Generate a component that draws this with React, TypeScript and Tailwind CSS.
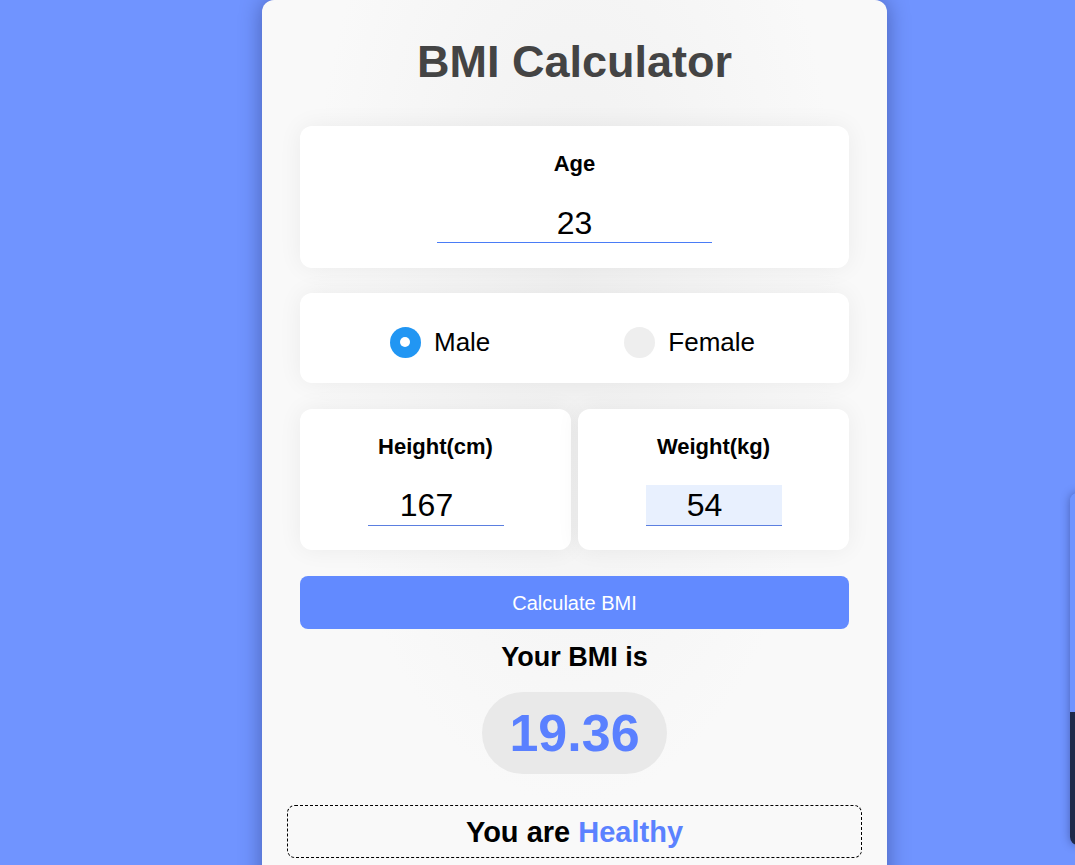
import React from "react";

const font = { fontFamily: '"Liberation Sans", Arial, sans-serif' };

export default function App() {
  return (
    <div
      className="relative min-h-screen w-full overflow-hidden bg-[#7094ff] flex justify-start pl-[262px]"
      style={font}
    >
      <div className="w-[625px] h-[900px] shrink-0 rounded-t-xl bg-[#f9f9f9] bg-[radial-gradient(ellipse_at_50%_30%,#f0f0f0_0%,#f9f9f9_60%)] shadow-[0_0_22px_rgba(0,0,40,0.35)] px-[38px] flex flex-col">
        <h1 className="mt-[34px] text-center text-[45px] leading-[56px] font-bold text-[#444444]">
          BMI Calculator
        </h1>

        {/* Age */}
        <div className="mt-[36px] h-[142px] rounded-xl bg-white shadow-[0_0_25px_rgba(0,0,0,0.06)] flex flex-col items-center pt-[25px]">
          <div className="text-[22px] leading-[25px] font-bold text-black">Age</div>
          <input
            defaultValue="23"
            className="mt-[27px] w-[275px] h-[40px] bg-transparent border-0 border-b border-[#4a7cf6] text-center text-[32px] text-black outline-none"
            style={font}
          />
        </div>

        {/* Gender */}
        <div className="mt-[25px] h-[90px] rounded-xl bg-white shadow-[0_0_25px_rgba(0,0,0,0.06)] flex items-center justify-center gap-[134px] pt-[8px] pr-[4px]">
          <label className="flex items-center gap-[13px]">
            <span className="w-[31px] h-[31px] rounded-full bg-[#2196f3] flex items-center justify-center">
              <span className="w-[10px] h-[10px] rounded-full bg-white" />
            </span>
            <span className="text-[26px] leading-[30px] text-black">Male</span>
          </label>
          <label className="flex items-center gap-[13px]">
            <span className="w-[31px] h-[31px] rounded-full bg-[#eeeeee]" />
            <span className="text-[26px] leading-[30px] text-black">Female</span>
          </label>
        </div>

        {/* Height / Weight */}
        <div className="mt-[26px] grid grid-cols-2 gap-[7px]">
          <div className="h-[141px] rounded-xl bg-white shadow-[0_0_25px_rgba(0,0,0,0.06)] flex flex-col items-center pt-[25px]">
            <div className="text-[22px] leading-[25px] font-bold text-black">Height(cm)</div>
            <input
              defaultValue="167"
              className="mt-[26px] w-[136px] h-[41px] bg-transparent border-0 border-b border-[#5b7fe0] pr-[18px] text-center text-[32px] text-black outline-none"
              style={font}
            />
          </div>
          <div className="h-[141px] rounded-xl bg-white shadow-[0_0_25px_rgba(0,0,0,0.06)] flex flex-col items-center pt-[25px]">
            <div className="text-[22px] leading-[25px] font-bold text-black">Weight(kg)</div>
            <input
              defaultValue="54"
              className="mt-[26px] w-[136px] h-[41px] bg-[#e8f0fe] border-0 border-b border-[#5b7fe0] pr-[18px] text-center text-[32px] text-black outline-none"
              style={font}
            />
          </div>
        </div>

        <button
          className="mt-[26px] h-[53px] w-full rounded-lg bg-[#628aff] text-white text-[20px]"
          style={font}
        >
          Calculate BMI
        </button>

        <div className="mt-[13px] text-center text-[27px] leading-[31px] font-bold text-black">
          Your BMI is
        </div>

        <div className="mt-[19px] flex justify-center">
          <div className="w-[185px] h-[82px] rounded-full bg-[#e9e9e9] flex items-center justify-center text-[52px] font-bold text-[#5a80ff]">
            19.36
          </div>
        </div>

        <div className="mt-[31px] -mx-[13px] h-[53px] rounded-lg border border-dashed border-black flex items-center justify-center pt-[3px] text-[29px] font-bold text-black">
          <span>
            You are <span className="text-[#5b82ff]">Healthy</span>
          </span>
        </div>
      </div>

      {/* right edge overlay */}
      <div className="absolute left-[1070px] top-[493px] w-[24px] h-[352px] rounded-l-lg overflow-hidden shadow-[0_0_10px_rgba(0,0,40,0.35)] flex flex-col">
        <div className="h-[219px] bg-[#7094ff]" />
        <div className="flex-1 bg-[#1f2a4a]" />
      </div>
    </div>
  );
}
